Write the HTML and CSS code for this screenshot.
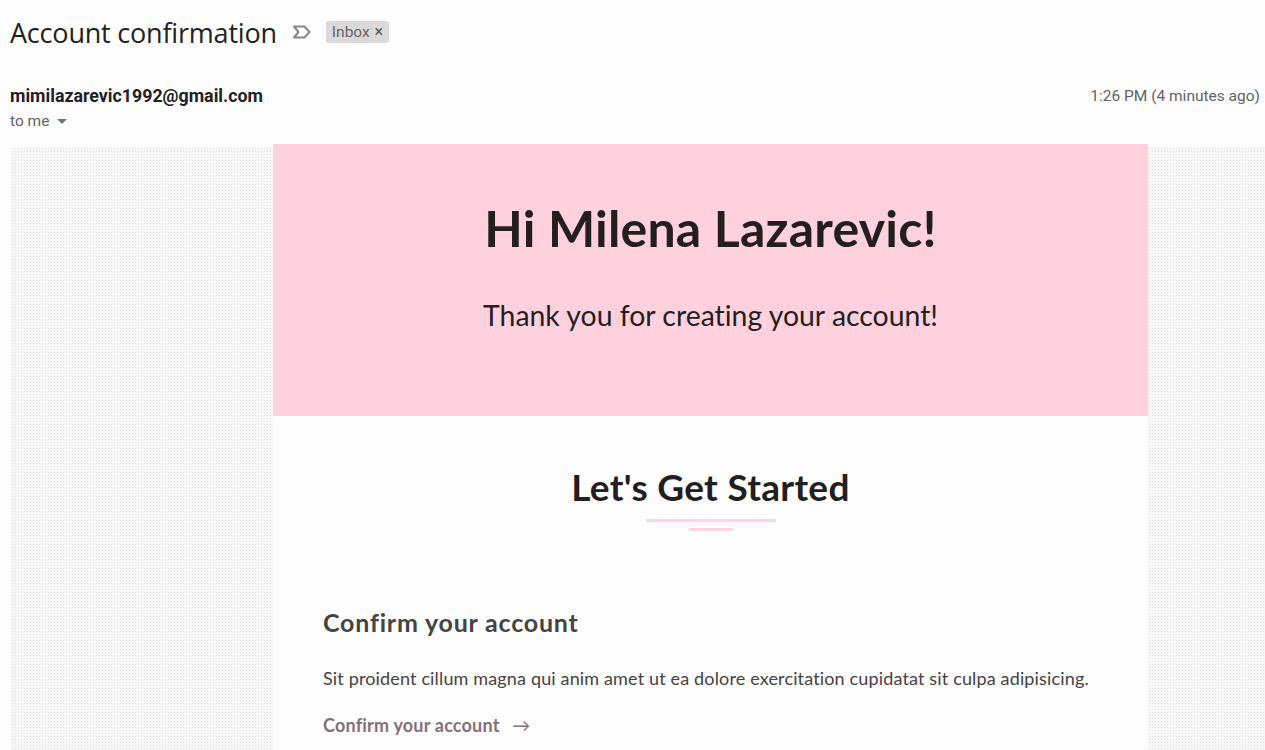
FILE: index.html
```html
<!DOCTYPE html>
<html>
<head>
<meta charset="utf-8">
<link rel="stylesheet" href="styles.css">
</head>
<body>
<div class="subject-row">
  <h1 class="subject">Account confirmation</h1>
  <svg class="label-icon" width="20" height="16" viewBox="0 0 20 16"><path d="M2 2.5 H12.5 L17.5 8 L12.5 13.5 H2 L6.5 8 Z" fill="none" stroke="#8a8589" stroke-width="2" stroke-linejoin="round"/></svg>
  <span class="chip">Inbox <span class="chip-x">×</span></span>
</div>
<div class="meta-row">
  <div class="sender">
    <div class="from">mimilazarevic1992@gmail.com</div>
    <div class="to">to me <span class="caret"></span></div>
  </div>
  <div class="time">1:26 PM (4 minutes ago)</div>
</div>
<div class="mail-body">
  <div class="card">
    <div class="hero">
      <h2 class="hero-title">Hi Milena Lazarevic!</h2>
      <p class="hero-sub">Thank you for creating your account!</p>
    </div>
    <div class="content">
      <h3 class="section-title">Let's Get Started</h3>
      <div class="rule rule-long"></div>
      <div class="rule rule-short"></div>
      <div class="block">
        <h4 class="block-title">Confirm your account</h4>
        <p class="block-text">Sit proident cillum magna qui anim amet ut ea dolore exercitation cupidatat sit culpa adipisicing.</p>
        <a class="block-link" href="#">Confirm your account <span class="arrow">→</span></a>
      </div>
    </div>
  </div>
</div>
</body>
</html>
```
FILE: styles.css
```css
html, body {
  margin: 0;
  padding: 0;
  background: #fdfdfd;
  overflow: hidden;
}
body {
  font-family: Roboto, "Liberation Sans", sans-serif;
  color: #222;
}
.subject-row {
  display: flex;
  align-items: center;
  padding: 15px 0 0 10px;
  height: 34px;
}
.subject {
  margin: 0;
  font-family: "Open Sans", sans-serif;
  font-weight: 400;
  font-size: 27px;
  color: #222;
  letter-spacing: -0.2px;
}
.label-icon {
  margin-left: 15px;
}
.chip {
  margin-left: 14px;
  background: #dcd9da;
  color: #666;
  font-size: 15.5px;
  line-height: 21px;
  padding: 0 6px;
  border-radius: 3px;
}
.chip-x {
  font-size: 16px;
  color: #555;
  margin-left: 1px;
}
.meta-row {
  display: flex;
  justify-content: space-between;
  padding: 37px 5px 0 10px;
}
.from {
  font-weight: 700;
  font-size: 17.8px;
  color: #202124;
  line-height: 20px;
}
.to {
  font-size: 15.5px;
  color: #5f6368;
  line-height: 20px;
  margin-top: 5px;
  display: flex;
  align-items: center;
}
.caret {
  margin-left: 8px;
  width: 0;
  height: 0;
  border-left: 5px solid transparent;
  border-right: 5px solid transparent;
  border-top: 5px solid #777;
}
.time {
  font-size: 15.5px;
  color: #5f6368;
  line-height: 20px;
}
.mail-body {
  margin: 16px 0 0 11px;
  height: 610px;
  background-color: #f7f7f7;
  background-image: radial-gradient(circle, #e2e2e2 0.8px, transparent 1px);
  background-size: 3px 3px;
}
.card {
  width: 875px;
  margin-left: 262px;
  position: relative;
  top: -3px;
  background: #fdfdfd;
  font-family: "Lato", "Open Sans", sans-serif;
  font-variant-ligatures: none;
}
.hero {
  background: #ffd1de;
  height: 272px;
  display: flex;
  flex-direction: column;
  align-items: center;
  box-sizing: border-box;
  padding-top: 54px;
}
.hero-title {
  margin: 0;
  font-size: 50px;
  font-weight: 700;
  color: #231f20;
  line-height: 60px;
  letter-spacing: 0.2px;
}
.hero-sub {
  margin: 39px 0 0;
  font-size: 28.4px;
  font-weight: 400;
  color: #231f20;
  line-height: 36px;
}
.content {
  display: flex;
  flex-direction: column;
  align-items: center;
  padding-top: 51px;
  height: 340px;
}
.section-title {
  margin: 0;
  font-size: 37px;
  font-weight: 700;
  color: #231f20;
  line-height: 40px;
  letter-spacing: 0.3px;
}
.rule {
  height: 3px;
  background: #fbd5e0;
}
.rule-long {
  width: 130px;
  margin-top: 12px;
}
.rule-short {
  width: 44px;
  margin-top: 6px;
}
.block {
  align-self: stretch;
  padding: 76px 50px 0;
}
.block-title {
  margin: 0;
  font-size: 25px;
  font-weight: 700;
  color: #444;
  line-height: 30px;
  letter-spacing: 0.8px;
}
.block-text {
  margin: 29px 0 0;
  font-size: 18px;
  color: #474244;
  line-height: 24px;
  letter-spacing: 0.15px;
}
.block-link {
  display: inline-block;
  margin-top: 23px;
  font-size: 18px;
  font-weight: 700;
  color: #85707a;
  text-decoration: none;
  line-height: 24px;
  letter-spacing: 0.2px;
}
.arrow {
  margin-left: 8px;
  font-weight: 400;
}
```
